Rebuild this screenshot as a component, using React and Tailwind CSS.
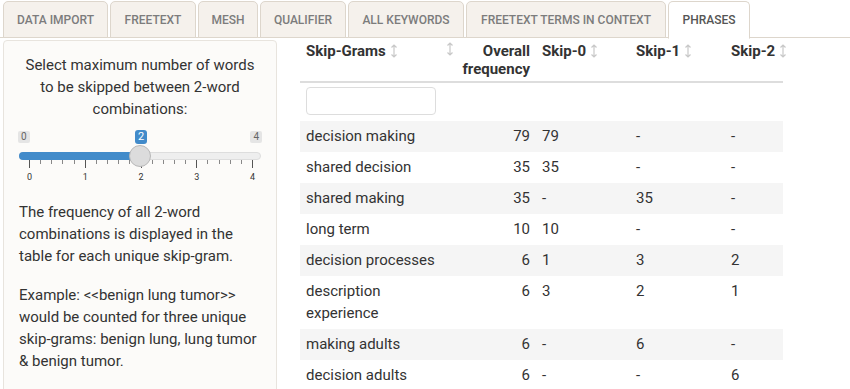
import React from 'react';

const tabs = [
  { label: 'DATA IMPORT', w: 'w-[105px]' },
  { label: 'FREETEXT', w: 'w-[86px]' },
  { label: 'MESH', w: 'w-[60px]' },
  { label: 'QUALIFIER', w: 'w-[86px]' },
  { label: 'ALL KEYWORDS', w: 'w-[116px]' },
  { label: 'FREETEXT TERMS IN CONTEXT', w: 'w-[200px]' },
  { label: 'PHRASES', w: 'w-[82px]', active: true },
];

const rows = [
  ['decision making', '79', '79', '-', '-'],
  ['shared decision', '35', '35', '-', '-'],
  ['shared making', '35', '-', '35', '-'],
  ['long term', '10', '10', '-', '-'],
  ['decision processes', '6', '1', '3', '2'],
  ['description experience', '6', '3', '2', '1'],
  ['making adults', '6', '-', '6', '-'],
  ['decision adults', '6', '-', '-', '6'],
];

function SortIcon() {
  return (
    <svg width="8" height="14" viewBox="0 0 8 14" className="inline-block align-[-2px]">
      <path d="M4 1 V13 M1.5 3.5 L4 1 L6.5 3.5 M1.5 10.5 L4 13 L6.5 10.5" stroke="#c8c8c8" strokeWidth="1.2" fill="none" />
    </svg>
  );
}

function Slider() {
  const ticks = [];
  for (let i = 0; i <= 20; i++) {
    const major = i % 5 === 0;
    ticks.push(
      <div
        key={i}
        className={`absolute top-[33px] w-px ${major ? 'h-[8px] bg-[#555]' : 'h-[4px] bg-[#888]'}`}
        style={{ left: 10 + i * 11.15 }}
      />
    );
  }
  return (
    <div className="relative mt-[7px] h-[55px] w-full">
      <span className="absolute left-[-1px] top-[4px] h-[12px] rounded-[2px] bg-[#e5e5e5] px-[3px] text-[10px] leading-[12px] text-[#666]">0</span>
      <span className="absolute left-[116px] top-[3px] h-[14px] rounded-[3px] bg-[#428bca] px-[3px] text-[11px] leading-[14px] text-white">2</span>
      <span className="absolute right-[-1px] top-[4px] h-[12px] rounded-[2px] bg-[#e5e5e5] px-[3px] text-[10px] leading-[12px] text-[#666]">4</span>
      <div className="absolute left-0 right-0 top-[25px] h-[8px] rounded-full border border-[#ddd] bg-[#eee]" />
      <div className="absolute left-0 top-[25px] h-[8px] w-[122px] rounded-l-full bg-[#428bca]" />
      {ticks}
      <div className="absolute left-[110px] top-[18px] h-[22px] w-[22px] rounded-full border border-[#b8b8b8] bg-[#dcdcdc]" />
      {[0, 1, 2, 3, 4].map((n) => (
        <span
          key={n}
          className="absolute top-[44px] w-[10px] -ml-[5px] text-center text-[9px] leading-[12px] text-[#333]"
          style={{ left: 10.5 + n * 55.75 }}
        >
          {n}
        </span>
      ))}
    </div>
  );
}

export default function App() {
  return (
    <div className="h-[389px] w-[850px] overflow-hidden bg-white font-['Roboto',sans-serif] text-[#333]">
      {/* tab bar */}
      <div className="flex h-[38px] gap-[2px] border-b border-[#ddd6cc] pl-[3px] pt-[1px]">
        {tabs.map((t) => (
          <div
            key={t.label}
            className={`${t.w} flex h-[37px] items-center justify-center rounded-t-[5px] border border-[#ddd6cc] text-[12px] font-medium ${
              t.active ? 'mb-[-1px] h-[38px] border-b-white bg-white text-[#555]' : 'bg-[#f5f1ec] text-[#7c7c7c]'
            }`}
          >
            {t.label}
          </div>
        ))}
      </div>

      <div className="flex pt-[2px]">
        {/* sidebar */}
        <div className="ml-[3px] h-[400px] w-[274px] shrink-0 rounded-[4px] border border-[#e8e4de] bg-[#fcfbf9] px-[15px] pt-[13px] text-[15px] leading-[22px]">
          <p className="text-center">
            Select maximum number of words
            <br />
            to be skipped between 2-word
            <br />
            combinations:
          </p>
          <Slider />
          <p className="mt-[19px]">
            The frequency of all 2-word combinations is displayed in the table for each unique skip-gram.
          </p>
          <p className="mt-[17px]">
            Example: &lt;&lt;benign lung tumor&gt;&gt; would be counted for three unique skip-grams: benign lung, lung tumor &amp; benign tumor.
          </p>
        </div>

        {/* table */}
        <div className="ml-[23px]">
          <table className="w-[483px] table-fixed border-collapse text-[15px]">
            <colgroup>
              <col className="w-[142px]" />
              <col className="w-[94px]" />
              <col className="w-[94px]" />
              <col className="w-[95px]" />
              <col className="w-[58px]" />
            </colgroup>
            <thead>
              <tr className="border-b-2 border-[#ddd] align-top font-bold leading-[18px]">
                <th className="pl-[6px] pr-[2px] pb-[3px] pt-[2px] text-left whitespace-nowrap">
                  Skip-Grams <SortIcon />
                </th>
                <th className="pl-[4px] pr-[6px] pb-[3px] pt-[2px] text-right">
                  <div className="flex justify-between">
                    <SortIcon />
                    <span>
                      Overall
                      <br />
                      frequency
                    </span>
                  </div>
                </th>
                <th className="px-[6px] pb-[3px] pt-[2px] text-left whitespace-nowrap">
                  Skip-0 <SortIcon />
                </th>
                <th className="px-[6px] pb-[3px] pt-[2px] text-left whitespace-nowrap">
                  Skip-1 <SortIcon />
                </th>
                <th className="px-[6px] pb-[3px] pt-[2px] text-left whitespace-nowrap">
                  Skip-2 <SortIcon />
                </th>
              </tr>
            </thead>
            <tbody className="leading-[22px]">
              <tr>
                <td className="pl-[6px] pb-[6px] pt-[4px]">
                  <div className="h-[28px] w-[130px] rounded-[4px] border border-[#ddd] bg-white" />
                </td>
                <td />
                <td />
                <td />
                <td />
              </tr>
              {rows.map((r, i) => (
                <tr key={r[0]} className={i % 2 === 0 ? 'bg-[#f5f5f5]' : 'bg-white'}>
                  <td className="pl-[6px] pr-[2px] pb-[5px] pt-[4px] align-top">{r[0]}</td>
                  <td className="pl-[4px] pr-[6px] pb-[5px] pt-[4px] text-right align-top">{r[1]}</td>
                  <td className="px-[6px] pb-[5px] pt-[4px] align-top">{r[2]}</td>
                  <td className="px-[6px] pb-[5px] pt-[4px] align-top">{r[3]}</td>
                  <td className="px-[6px] pb-[5px] pt-[4px] align-top">{r[4]}</td>
                </tr>
              ))}
            </tbody>
          </table>
        </div>
      </div>
    </div>
  );
}
